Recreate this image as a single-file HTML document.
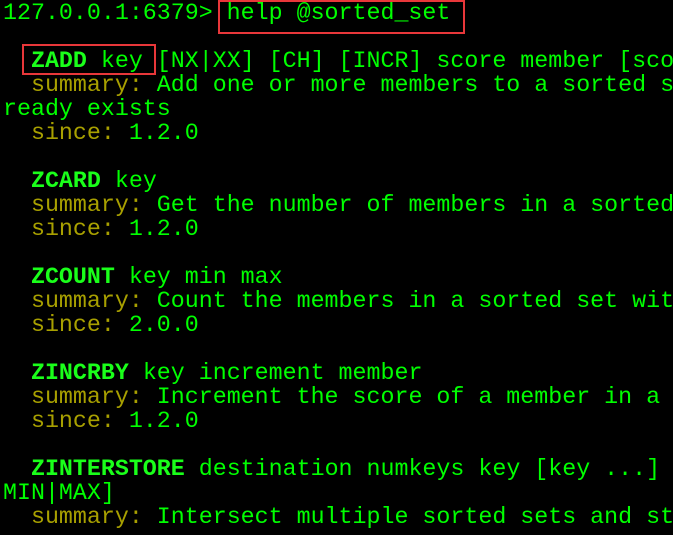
<!DOCTYPE html>
<html><head><style>
html,body{margin:0;padding:0;background:#000;width:673px;height:535px;overflow:hidden}
#w{position:absolute;left:0;top:0;width:673px;height:535px;overflow:hidden}
pre{margin:0;position:absolute;left:3px;top:1px;font-family:"Liberation Mono",monospace;font-size:23.3px;line-height:24px;color:#00ff00;white-space:pre}
b{font-weight:bold;color:#1aff1a}
.y{color:#a8a000}
.box{position:absolute;border:2px solid #e8373a;box-sizing:border-box}
</style></head><body><div id="w">
<pre>127.0.0.1:6379&gt; help @sorted_set

  <b>ZADD</b> key [NX|XX] [CH] [INCR] score member [sco
  <span class="y">summary:</span> Add one or more members to a sorted s
ready exists
  <span class="y">since:</span> 1.2.0

  <b>ZCARD</b> key
  <span class="y">summary:</span> Get the number of members in a sorted
  <span class="y">since:</span> 1.2.0

  <b>ZCOUNT</b> key min max
  <span class="y">summary:</span> Count the members in a sorted set wit
  <span class="y">since:</span> 2.0.0

  <b>ZINCRBY</b> key increment member
  <span class="y">summary:</span> Increment the score of a member in a
  <span class="y">since:</span> 1.2.0

  <b>ZINTERSTORE</b> destination numkeys key [key ...]
MIN|MAX]
  <span class="y">summary:</span> Intersect multiple sorted sets and st</pre>
<div class="box" style="left:218px;top:0;width:247px;height:34px"></div>
<div class="box" style="left:22px;top:44px;width:134px;height:31px"></div>
</div></body></html>
